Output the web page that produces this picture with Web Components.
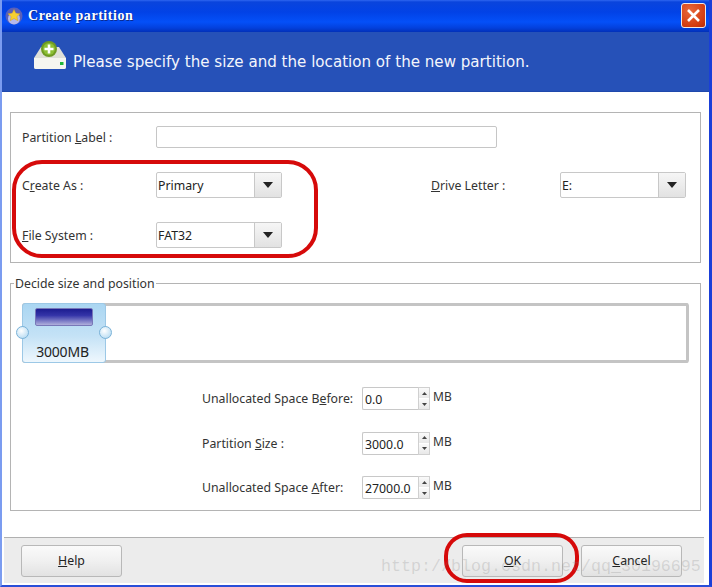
<!DOCTYPE html>
<html>
<head>
<meta charset="utf-8">
<title>Create partition</title>
<style>
    html, body { margin: 0; height: 100%; background: #fff; }
</style>
</head>
<body>
<partition-dialog></partition-dialog>

<template id="dialog-tpl">
    <style>
        :host {
            display: flex;
            flex-direction: column;
            position: relative;
            box-sizing: border-box;
            width: 712px;
            height: 587px;
            font: 12.3px "Noto Sans", sans-serif;
            color: #333;
            background: #fff;
            overflow: hidden;
            border-left: 2px solid #7b9cf0;
            border-right: 3px solid #1a3fd8;
            border-bottom: 2px solid #2a4fd8;
        }
        .content {
            flex: 1;
            display: flex;
            flex-direction: column;
            gap: 20px;
            padding: 20px 8px 0 8px;
        }
        .grid {
            display: grid;
            grid-template-columns: 134px 126px 149px 129px 126px;
            grid-template-rows: 22px 26px 26px;
            row-gap: 24px;
            align-items: center;
            box-sizing: border-box;
            height: 151px;
            padding: 13px 0 0 11px;
            border: 1px solid #b4b4b4;
        }
        .wide { grid-column: 2 / 6; width: 341px; }
        .spins {
            display: grid;
            grid-template-columns: 160px 71px 30px;
            grid-auto-rows: 23px;
            row-gap: 21.5px;
            align-items: center;
            margin: 24px 0 0 180px;
        }
        .unit { margin-top: -4px; font-size: 12px; }
        .redmark {
            position: absolute;
            box-sizing: border-box;
            border: 4px solid #d60a0a;
            pointer-events: none;
        }
        .mark-a { left: 10px; top: 160px; width: 306px; height: 98px; border-radius: 30px; }
        .mark-b { left: 442px; top: 533px; width: 135px; height: 50px; border-radius: 23px; }
        .wm {
            position: absolute;
            left: 379px;
            top: 557px;
            font: 16.67px "Liberation Mono", monospace;
            color: rgba(120, 120, 120, .22);
            white-space: nowrap;
        }
    </style>
    <dlg-titlebar>Create partition</dlg-titlebar>
    <dlg-banner>Please specify the size and the location of the new partition.</dlg-banner>
    <div class="content">
        <div class="grid">
            <span>Partition <u>L</u>abel :</span>
            <text-field class="wide"></text-field>
            <span>C<u>r</u>eate As :</span>
            <combo-box>Primary</combo-box>
            <span></span>
            <span><u>D</u>rive Letter :</span>
            <combo-box>E:</combo-box>
            <span><u>F</u>ile System :</span>
            <combo-box>FAT32</combo-box>
        </div>
        <size-group label="Decide size and position">
            <partition-bar size="3000MB"></partition-bar>
            <div class="spins">
                <span>Unallocated Space B<u>e</u>fore:</span>
                <spin-box>0.0</spin-box>
                <span class="unit">MB</span>
                <span>Partition <u>S</u>ize :</span>
                <spin-box>3000.0</spin-box>
                <span class="unit">MB</span>
                <span>Unallocated Space <u>A</u>fter:</span>
                <spin-box>27000.0</spin-box>
                <span class="unit">MB</span>
            </div>
        </size-group>
    </div>
    <dlg-footer>
        <xp-button slot="left"><u>H</u>elp</xp-button>
        <xp-button><u>O</u>K</xp-button>
        <xp-button><u>C</u>ancel</xp-button>
    </dlg-footer>
    <div class="redmark mark-a"></div>
    <div class="redmark mark-b"></div>
    <div class="wm">http://blog.csdn.net/qq_30196695</div>
</template>

<script>
// every element just stamps its markup into an open shadow root
const mount = (el, html) => {
    el.attachShadow({ mode: 'open' }).innerHTML = html;
};

class PartitionDialog extends HTMLElement {
    constructor() {
        super();
        this.attachShadow({ mode: 'open' })
            .appendChild(document.getElementById('dialog-tpl').content.cloneNode(true));
    }
}

class DlgTitlebar extends HTMLElement {
    constructor() {
        super();
        mount(this, `
            <style>
                :host {
                    display: flex;
                    align-items: center;
                    flex: none;
                    height: 32px;
                    box-sizing: border-box;
                    padding: 0 3px 1px 3px;
                    background: linear-gradient(#2f66f0 0, #0a44dc 2px, #0242e6 12px, #0450f8 22px, #0340dc 28px, #0230b8 100%);
                    font: bold 14px "Liberation Serif", serif;
                    letter-spacing: .55px;
                    color: #fff;
                    text-shadow: 1px 1px 0 #0a2a90;
                }
                .name { margin-left: 5px; flex: 1; }
                .close {
                    width: 25px;
                    height: 25px;
                    box-sizing: border-box;
                    border: 1px solid #f2e8e4;
                    border-radius: 3px;
                    background: radial-gradient(circle at 35% 30%, #e8683c, #d43c10 70%, #b82c08);
                }
                .close svg { display: block; }
            </style>
            <svg width="18" height="18" viewBox="0 0 18 18">
                <circle cx="9" cy="9" r="8.5" fill="#5a60b8"/>
                <circle cx="9" cy="11.5" r="6" fill="#b4b8ec"/>
                <path d="M9 2.5l1.800 3.900 4.200.4-3.100 2.800.9 4.100-3.800-2.200-3.800 2.200.9-4.100-3.100-2.800 4.200-.4z" fill="#f6d030" stroke="#d8a018" stroke-width=".5"/>
            </svg>
            <span class="name"><slot></slot></span>
            <div class="close">
                <svg width="23" height="23" viewBox="0 0 23 23">
                    <path d="M6 6l11 11M17 6L6 17" stroke="#fff" stroke-width="2.6" fill="none"/>
                </svg>
            </div>
        `);
    }
}

class DlgBanner extends HTMLElement {
    constructor() {
        super();
        mount(this, `
            <style>
                :host {
                    display: flex;
                    align-items: center;
                    flex: none;
                    height: 60px;
                    box-sizing: border-box;
                    padding-left: 31px;
                    background: #2651b8;
                    border-bottom: 1px solid #1f48ac;
                    color: #f4f6fc;
                    font: 15.1px "DejaVu Sans", sans-serif;
                }
                svg { flex: none; margin: -12px 6px 0 0; }
            </style>
            <svg width="34" height="29" viewBox="0 0 34 29">
                <path d="M8 6h18l7 11v9a2 2 0 0 1-2 2H3a2 2 0 0 1-2-2v-9z" fill="#dfe0d8"/>
                <path d="M1 17h32v9a2 2 0 0 1-2 2H3a2 2 0 0 1-2-2z" fill="#f6f6f0"/>
                <rect x="27" y="21" width="3.5" height="3" fill="#22b83a"/>
                <circle cx="16" cy="8" r="8" fill="#6f9a24"/>
                <circle cx="16" cy="8" r="6" fill="#8cc034"/>
                <path d="M16 3.500v9M11.500 8h9" stroke="#fff" stroke-width="2.6"/>
            </svg>
            <slot></slot>
        `);
    }
}

class TextField extends HTMLElement {
    constructor() {
        super();
        mount(this, `
            <style>
                :host {
                    display: block;
                    box-sizing: border-box;
                    height: 22px;
                    background: #fff;
                    border: 1px solid #c6c6c6;
                    border-radius: 2px;
                }
            </style>
        `);
    }
}

class ComboBox extends HTMLElement {
    constructor() {
        super();
        mount(this, `
            <style>
                :host {
                    display: flex;
                    box-sizing: border-box;
                    width: 126px;
                    height: 26px;
                    background: #fff;
                    border: 1px solid #c8c8c8;
                    border-radius: 2px;
                    color: #222;
                }
                .val { flex: 1; padding-left: 1px; line-height: 25px; }
                .arrow {
                    width: 26px;
                    display: flex;
                    align-items: center;
                    justify-content: center;
                    border-left: 1px solid #c8c8c8;
                    background: linear-gradient(#f6f6f6, #e2e2e2);
                }
            </style>
            <span class="val"><slot></slot></span>
            <span class="arrow">
                <svg width="10" height="6" viewBox="0 0 10 6"><path d="M0 0h10L5 6z" fill="#222"/></svg>
            </span>
        `);
    }
}

class SizeGroup extends HTMLElement {
    constructor() {
        super();
        mount(this, `
            <style>
                :host { display: block; }
                fieldset {
                    box-sizing: border-box;
                    height: 236px;
                    margin: -8px 0 0;
                    padding: 11px 11px 0 11px;
                    border: 1px solid #b4b4b4;
                }
                legend { padding: 0 1px; margin-left: -8px; }
            </style>
            <fieldset>
                <legend>${this.getAttribute('label')}</legend>
                <slot></slot>
            </fieldset>
        `);
    }
}

class PartitionBar extends HTMLElement {
    constructor() {
        super();
        mount(this, `
            <style>
                :host {
                    display: block;
                    position: relative;
                    box-sizing: border-box;
                    height: 60px;
                    background: #fff;
                    border: solid #c4c4c4;
                    border-width: 3px 3px 3px 0;
                    border-radius: 3px;
                }
                .block {
                    position: absolute;
                    left: 0;
                    top: -3px;
                    bottom: -3px;
                    width: 84px;
                    box-sizing: border-box;
                    border: 1px solid #9cc8e6;
                    border-radius: 3px;
                    background: linear-gradient(#aad6f2, #c4e2f6 55%, #eef7fd);
                    text-align: center;
                    color: #222;
                    font-size: 14px;
                }
                .fill {
                    margin: 4px auto 0;
                    width: 58px;
                    height: 18px;
                    box-sizing: border-box;
                    border: 1px solid #7878b8;
                    border-radius: 2px;
                    background: linear-gradient(#1c1c90, #3434a8 40%, #b0b0dc);
                }
                .size { margin-top: 16px; padding-right: 3px; letter-spacing: -.2px; }
                .knob {
                    position: absolute;
                    top: 22px;
                    width: 13px;
                    height: 13px;
                    box-sizing: border-box;
                    border: 1px solid #7ab2d8;
                    border-radius: 50%;
                    background: radial-gradient(circle at 40% 35%, #fff, #a8d4f0);
                }
                .l { left: -7px; }
                .r { right: -7px; }
            </style>
            <div class="block">
                <div class="fill"></div>
                <div class="size">${this.getAttribute('size')}</div>
                <span class="knob l"></span>
                <span class="knob r"></span>
            </div>
        `);
    }
}

class SpinBox extends HTMLElement {
    constructor() {
        super();
        mount(this, `
            <style>
                :host {
                    display: flex;
                    align-items: center;
                    width: 68px;
                    height: 23px;
                    color: #222;
                }
                .val {
                    flex: 1;
                    box-sizing: border-box;
                    height: 23px;
                    line-height: 23px;
                    padding-left: 2px;
                    border: 1px solid #c8c8c8;
                    border-right: 0;
                    border-radius: 2px 0 0 2px;
                    background: #fff;
                    white-space: nowrap;
                }
                .btns {
                    display: flex;
                    flex-direction: column;
                    width: 12px;
                    height: 23px;
                    box-sizing: border-box;
                    border: 1px solid #d0d0d0;
                    gap: 1px;
                    background: #fff;
                }
                .btns span {
                    flex: 1;
                    display: flex;
                    align-items: center;
                    justify-content: center;
                    background: linear-gradient(#fafafa, #e8e8e8);
                }
            </style>
            <span class="val"><slot></slot></span>
            <span class="btns">
                <span><svg width="5" height="3" viewBox="0 0 5 3"><path d="M0 3h5L2.500 0z" fill="#444"/></svg></span>
                <span><svg width="5" height="3" viewBox="0 0 5 3"><path d="M0 0h5L2.500 3z" fill="#444"/></svg></span>
            </span>
        `);
    }
}

class DlgFooter extends HTMLElement {
    constructor() {
        super();
        mount(this, `
            <style>
                :host {
                    display: flex;
                    align-items: center;
                    flex: none;
                    box-sizing: border-box;
                    height: 46px;
                    margin: 0 5px 2px 2px;
                    padding: 0 22px 0 17px;
                    gap: 18px;
                    background: #ececec;
                    border-top: 1px solid #b0b0b0;
                }
                .left { flex: 1; }
            </style>
            <div class="left"><slot name="left"></slot></div>
            <slot></slot>
        `);
    }
}

class XpButton extends HTMLElement {
    constructor() {
        super();
        mount(this, `
            <style>
                :host {
                    display: inline-flex;
                    align-items: center;
                    justify-content: center;
                    box-sizing: border-box;
                    width: 101px;
                    height: 32px;
                    border: 1px solid #b8b8b8;
                    border-radius: 3px;
                    background: linear-gradient(#fafafa, #f0f0f0 50%, #e2e2e2);
                    color: #222;
                }
            </style>
            <slot></slot>
        `);
    }
}

customElements.define('partition-dialog', PartitionDialog);
customElements.define('dlg-titlebar', DlgTitlebar);
customElements.define('dlg-banner', DlgBanner);
customElements.define('text-field', TextField);
customElements.define('combo-box', ComboBox);
customElements.define('size-group', SizeGroup);
customElements.define('partition-bar', PartitionBar);
customElements.define('spin-box', SpinBox);
customElements.define('dlg-footer', DlgFooter);
customElements.define('xp-button', XpButton);
</script>
</body>
</html>
